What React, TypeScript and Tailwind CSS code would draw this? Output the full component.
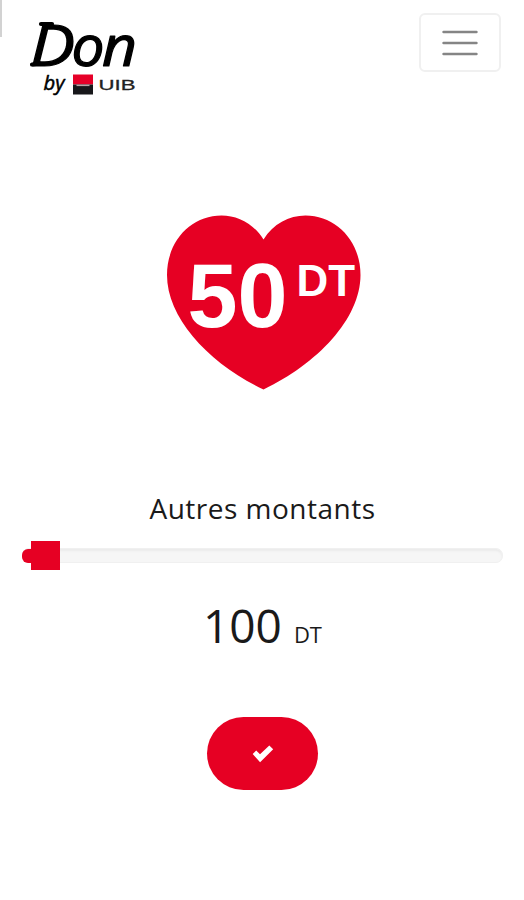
import { useState } from "react";

const MIN = 100;
const MAX = 5000;

const Logo = () => {
    return (
        <svg className="block h-[80px] w-[110px] overflow-visible" viewBox="28 18 110 80" role="img" aria-label="Don by UIB">
            <g fontFamily="'Open Sans', sans-serif" fontStyle="italic" fill="#000" stroke="#000" strokeLinejoin="round">
                <text y="65.500" fontSize="57" fontWeight="400" strokeWidth="1.200">
                    <tspan x="30" textLength="45" lengthAdjust="spacingAndGlyphs">
                        D
                    </tspan>
                    <tspan x="71.500" textLength="33" lengthAdjust="spacingAndGlyphs">
                        o
                    </tspan>
                    <tspan x="102" textLength="35" lengthAdjust="spacingAndGlyphs">
                        n
                    </tspan>
                </text>
                <text x="43.500" y="90" fontSize="20" fontWeight="400" strokeWidth="0.500" textLength="21" lengthAdjust="spacingAndGlyphs">
                    by
                </text>
            </g>
            {/* foot and head of the D */}
            <path d="M32 64.500L40 63.500M41 24L52 24" fill="none" stroke="#000" strokeWidth="4.200" strokeLinecap="round" />
            <rect x="73" y="74.500" width="20" height="10" fill="#e60028" />
            <rect x="73" y="84.500" width="20" height="10" fill="#17171a" />
            <rect x="76.500" y="84.700" width="13" height="1.400" fill="#b9a5a8" />
            <text x="98.500" y="90" fontSize="15.500" fontFamily="'Liberation Sans', sans-serif" fill="#222" stroke="#222" strokeWidth="0.300" textLength="37" lengthAdjust="spacingAndGlyphs">
                UIB
            </text>
        </svg>
    );
};

const Heart = ({ amount }: { amount: number }) => {
    return (
        <svg className="block h-[175px] w-[194px]" viewBox="0 0 194 175">
            <path
                fill="#e60023"
                d="M96.500 24.500C106 9 122 0.500 138.500 0.500C169 0.500 193.500 26 193.500 60C193.500 104 150 149 96.500 174.500C43 149 0 104 0 60C0 26 24 0.500 54.500 0.500C71 0.500 87 9 96.500 24.500Z"
            />
            <g fontFamily="'Liberation Sans', sans-serif" fontWeight="700" fill="#fff">
                <text x="20.500" y="111.500" fontSize="90" textLength="100" lengthAdjust="spacingAndGlyphs">
                    {amount}
                </text>
                <text x="129.500" y="80.500" fontSize="44" textLength="58.500" lengthAdjust="spacingAndGlyphs">
                    DT
                </text>
            </g>
        </svg>
    );
};

export default function App() {
    const [amount, setAmount] = useState(MIN);
    const [open, setOpen] = useState(false);
    const progress = (amount - MIN) / (MAX - MIN);

    return (
        <div className="relative flex h-[900px] w-full flex-col items-center bg-white font-['Open_Sans',sans-serif] text-[#1a1a1a]">
            <div className="absolute left-0 top-0 h-[37px] w-[2px] bg-[#d2d2d2]" />
            <header className="flex w-full items-start justify-between pl-7 pr-[23px] pt-[13px]">
                <div className="pt-[5px]">
                    <Logo />
                </div>
                <button
                    onClick={() => setOpen(!open)}
                    aria-expanded={open}
                    aria-label="Menu"
                    className="flex h-[59px] w-[82px] items-center justify-center rounded-[6px] border-2 border-[#f0f0f0]"
                >
                    <svg className="h-[26px] w-[36px]" viewBox="0 0 36 26" stroke="#858585" strokeWidth="2.400" strokeLinecap="round">
                        <path d="M1.500 2H34.500M1.500 13H34.500M1.500 24H34.500" />
                    </svg>
                </button>
            </header>

            <main className="flex w-full flex-col items-center pl-[22px] pr-[21px] pt-[117px]">
                <div className="ml-[2px]">
                    <Heart amount={50} />
                </div>

                <h2 className="mt-[98px] text-[28px] leading-10 tracking-[0.5px]">Autres montants</h2>

                <div className="relative mt-[13px] flex h-[29px] w-full items-center">
                    <div className="h-[15px] w-full rounded-[7px] border border-[#f0f0f0] bg-[#f6f6f6] shadow-[inset_0_2px_2px_#ebebeb]" />
                    <div className="absolute left-0 h-[14px] rounded-l-[6px] bg-[#e60023]" style={{ width: 20 + progress * 450 }} />
                    <div className="absolute size-[29px] bg-[#e60023]" style={{ left: 9 + progress * 443 }} />
                    <input
                        type="range"
                        aria-label="Autres montants"
                        min={MIN}
                        max={MAX}
                        value={amount}
                        onChange={(e) => setAmount(Number(e.target.value))}
                        className="absolute inset-0 w-full opacity-0"
                    />
                </div>

                <p className="mt-[23px] flex items-baseline gap-[12px] leading-[64px]">
                    <span className="text-[46px]">{amount}</span>
                    <span className="text-[22px]">DT</span>
                </p>

                <button aria-label="Valider" className="mt-[51px] flex h-[73px] w-[111px] items-center justify-center rounded-[37px] bg-[#e60023]">
                    <svg className="h-[18px] w-[22px]" viewBox="0 0 22 18" fill="#fff">
                        <path d="M0.700 9L4.200 5.500L8 9.300L17.300 0.500L21.200 4.300L8.100 17.200Z" />
                    </svg>
                </button>
            </main>
        </div>
    );
}
